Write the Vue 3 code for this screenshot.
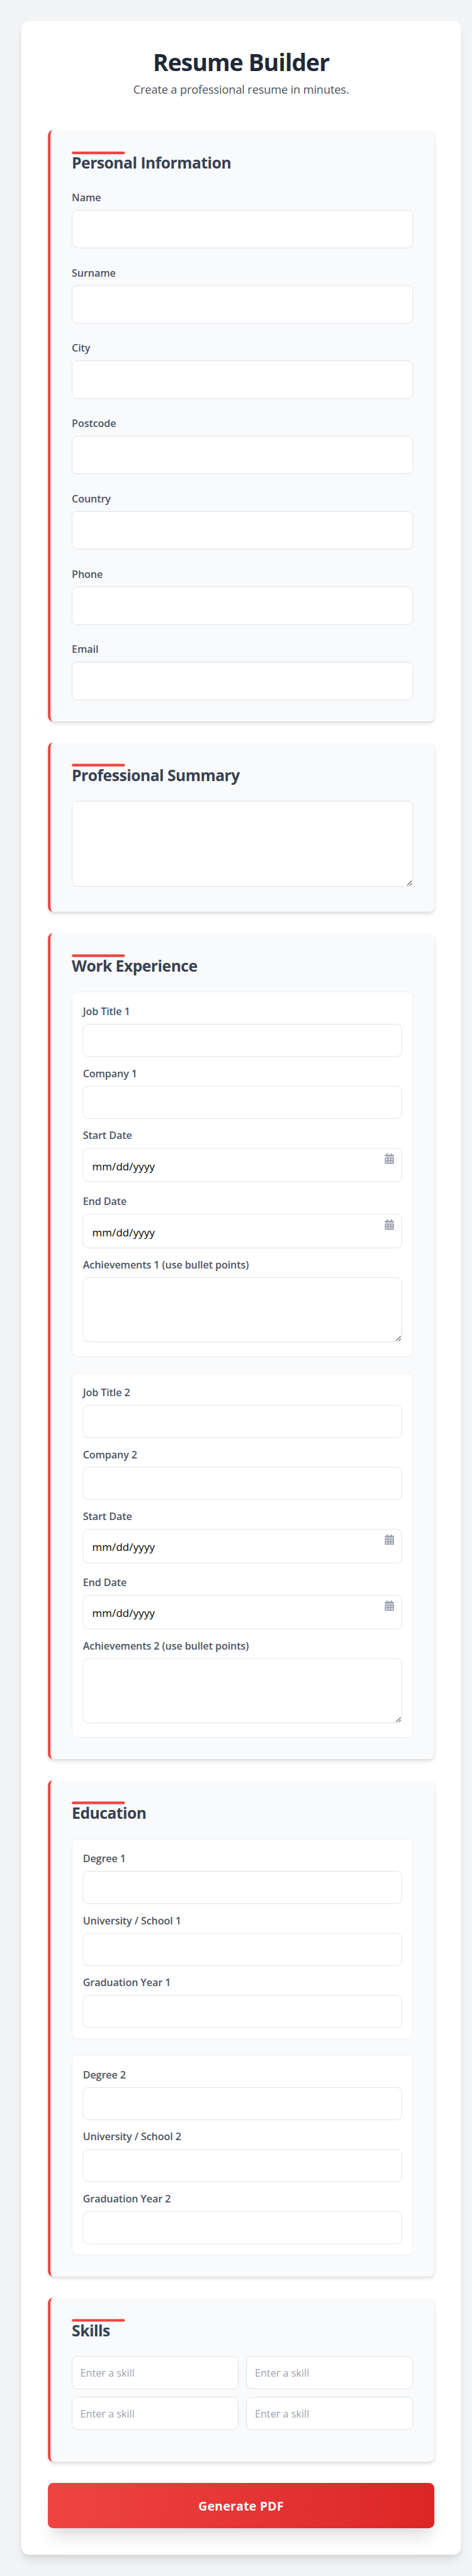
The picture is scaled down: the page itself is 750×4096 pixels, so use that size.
<script setup>
const personalFields = ['Name', 'Surname', 'City', 'Postcode', 'Country', 'Phone', 'Email']
const entries = [1, 2]
const skillSlots = [1, 2, 3, 4]
</script>

<template>
  <div class="viewport">
    <div class="page">
      <main class="sheet">
        <header class="header">
          <h1 class="title">Resume Builder</h1>
          <p class="subtitle">Create a professional resume in minutes.</p>
        </header>

        <form class="form" @submit.prevent>
          <section class="section">
            <h2 class="heading">Personal Information</h2>
            <div class="personal">
              <label v-for="field in personalFields" :key="field" class="field">
                <span class="label">{{ field }}</span>
                <input class="control tall" type="text" />
              </label>
            </div>
          </section>

          <section class="section">
            <h2 class="heading">Professional Summary</h2>
            <div class="area summary">
              <textarea class="control"></textarea>
              <svg class="grip" viewBox="0 0 12 12"><path d="M0.8 11.2L11.2 0.8M6.8 11.2L11.2 6.8" /></svg>
            </div>
          </section>

          <section class="section">
            <h2 class="heading">Work Experience</h2>
            <div class="cards">
              <div v-for="n in entries" :key="n" class="card job">
                <label class="field">
                  <span class="label">Job Title {{ n }}</span>
                  <input class="control" type="text" />
                </label>
                <label class="field">
                  <span class="label">Company {{ n }}</span>
                  <input class="control" type="text" />
                </label>
                <div v-for="kind in ['Start', 'End']" :key="kind" class="field" :class="{ first: kind === 'Start' }">
                  <span class="label">{{ kind }} Date</span>
                  <div class="control date">
                    <span>mm/dd/yyyy</span>
                    <svg class="calendar" viewBox="0 0 448 512">
                      <path d="M0 464c0 26.500 21.500 48 48 48h352c26.500 0 48-21.500 48-48V192H0v272zm320-196c0-6.600 5.400-12 12-12h40c6.600 0 12 5.400 12 12v40c0 6.600-5.400 12-12 12h-40c-6.600 0-12-5.400-12-12v-40zm0 128c0-6.600 5.400-12 12-12h40c6.600 0 12 5.400 12 12v40c0 6.600-5.400 12-12 12h-40c-6.600 0-12-5.400-12-12v-40zM192 268c0-6.600 5.400-12 12-12h40c6.600 0 12 5.400 12 12v40c0 6.600-5.400 12-12 12h-40c-6.600 0-12-5.400-12-12v-40zm0 128c0-6.600 5.400-12 12-12h40c6.600 0 12 5.400 12 12v40c0 6.600-5.400 12-12 12h-40c-6.600 0-12-5.400-12-12v-40zM64 268c0-6.600 5.400-12 12-12h40c6.600 0 12 5.400 12 12v40c0 6.600-5.400 12-12 12H76c-6.600 0-12-5.400-12-12v-40zm0 128c0-6.600 5.400-12 12-12h40c6.600 0 12 5.400 12 12v40c0 6.600-5.400 12-12 12H76c-6.600 0-12-5.400-12-12v-40zM400 64h-48V16c0-8.800-7.200-16-16-16h-32c-8.800 0-16 7.200-16 16v48H160V16c0-8.800-7.200-16-16-16h-32c-8.800 0-16 7.200-16 16v48H48C21.500 64 0 85.500 0 112v48h448v-48c0-26.500-21.500-48-48-48z" />
                    </svg>
                  </div>
                </div>
                <div class="field">
                  <span class="label">Achievements {{ n }} (use bullet points)</span>
                  <div class="area notes">
                    <textarea class="control"></textarea>
                    <svg class="grip" viewBox="0 0 12 12"><path d="M0.8 11.2L11.2 0.8M6.8 11.2L11.2 6.8" /></svg>
                  </div>
                </div>
              </div>
            </div>
          </section>

          <section class="section">
            <h2 class="heading">Education</h2>
            <div class="cards">
              <div v-for="n in entries" :key="n" class="card">
                <label v-for="name in ['Degree', 'University / School', 'Graduation Year']" :key="name" class="field">
                  <span class="label">{{ name }} {{ n }}</span>
                  <input class="control" type="text" />
                </label>
              </div>
            </div>
          </section>

          <section class="section">
            <h2 class="heading">Skills</h2>
            <div class="skills">
              <input v-for="slot in skillSlots" :key="slot" class="control" type="text" placeholder="Enter a skill" />
            </div>
          </section>

          <button class="submit" type="submit">Generate PDF</button>
        </form>
      </main>
    </div>
  </div>
</template>

<style>
body {
  margin: 0;
  background: #f3f4f6;
}
</style>

<style scoped>
.viewport {
  width: 750px;
  height: 4096px;
  overflow: hidden;
}
.page,
.page * {
  box-sizing: border-box;
}
.page {
  width: 1065px;
  height: 5814px;
  padding: 48px 25px 48px 48px;
  background: #f3f4f6;
  font-family: "Open Sans", "Noto Sans", sans-serif;
  transform: scale(0.704225, 0.704506);
  transform-origin: 0 0;
}
.sheet {
  height: 5718px;
  padding: 60px;
  background: #fff;
  border-radius: 18px;
  box-shadow: 0 15px 22.5px -4.5px rgba(0, 0, 0, 0.1), 0 6px 9px -3px rgba(0, 0, 0, 0.05);
}
.header {
  height: 186px;
  text-align: center;
}
.title {
  margin: 0 0 10.5px;
  color: #1f2937;
  font-size: 53px;
  font-weight: 700;
  line-height: 63px;
  letter-spacing: -1.3px;
}
.subtitle {
  margin: 0;
  color: #4b5563;
  font-size: 26px;
  line-height: 40px;
  letter-spacing: -0.28px;
}
.form {
  display: flex;
  flex-direction: column;
  gap: 48px;
}
.section {
  padding: 48px;
  border-left: 6px solid #ef4444;
  border-radius: 12px;
  background: #f9fafb;
  box-shadow: 0 6px 9px -1.5px rgba(0, 0, 0, 0.1), 0 3px 6px -1.5px rgba(0, 0, 0, 0.06);
}
.heading {
  position: relative;
  margin: 0 0 33px;
  color: #374151;
  font-size: 35px;
  font-weight: 700;
  line-height: 51px;
  letter-spacing: -0.7px;
}
.heading::before {
  content: "";
  position: absolute;
  top: 0;
  left: 0;
  width: 120px;
  height: 6px;
  border-radius: 3px;
  background: #ef4444;
}
.personal {
  display: flex;
  flex-direction: column;
  gap: 38px;
  padding-top: 2px;
}
.field {
  display: flex;
  flex-direction: column;
  gap: 12px;
}
.label {
  color: #4b5563;
  font-size: 23px;
  font-weight: 600;
  line-height: 34px;
  letter-spacing: -0.2px;
}
.control {
  display: block;
  width: 100%;
  height: 74px;
  margin: 0;
  padding: 0 18px;
  border: 1px solid #d1d5db;
  border-radius: 12px;
  outline: none;
  background: #fff;
  font-family: inherit;
  font-size: 23px;
  letter-spacing: 0;
  resize: none;
}
.control::placeholder {
  color: #9ca3af;
  opacity: 1;
}
.tall {
  height: 86px;
}
.area {
  position: relative;
}
.area .control {
  height: 100%;
}
.summary {
  height: 193px;
  margin-bottom: 9px;
}
.notes {
  height: 146px;
}
.grip {
  position: absolute;
  right: 2px;
  bottom: 2px;
  width: 12px;
  height: 12px;
  fill: none;
  stroke: #4a4a4a;
  stroke-width: 1.5;
}
.cards {
  display: flex;
  flex-direction: column;
  gap: 36px;
}
.card {
  display: flex;
  flex-direction: column;
  gap: 20px;
  padding: 26px 24px 24px;
  border: 1px solid #e5e7eb;
  border-radius: 12px;
  background: #fff;
}
.job {
  padding-bottom: 32px;
}
.first {
  margin-bottom: 6px;
}
.date {
  display: flex;
  justify-content: space-between;
  height: 77px;
  padding: 11px 17px 0 20px;
  color: #000;
  font-size: 24px;
  line-height: 57px;
  letter-spacing: 0.2px;
}
.calendar {
  width: 21px;
  height: 24px;
  fill: #9ca3af;
}
.skills {
  display: grid;
  grid-template-columns: 1fr 1fr;
  gap: 18px;
  padding-bottom: 24px;
}
.submit {
  height: 102px;
  padding: 0;
  border: 0;
  border-radius: 12px;
  background: linear-gradient(to right, #ef4444, #dc2626);
  box-shadow: 0 30px 37.5px -7.5px rgba(0, 0, 0, 0.1), 0 15px 15px -7.5px rgba(0, 0, 0, 0.04);
  color: #fff;
  font-family: inherit;
  font-size: 27.5px;
  font-weight: 700;
  letter-spacing: 0.4px;
}
</style>
